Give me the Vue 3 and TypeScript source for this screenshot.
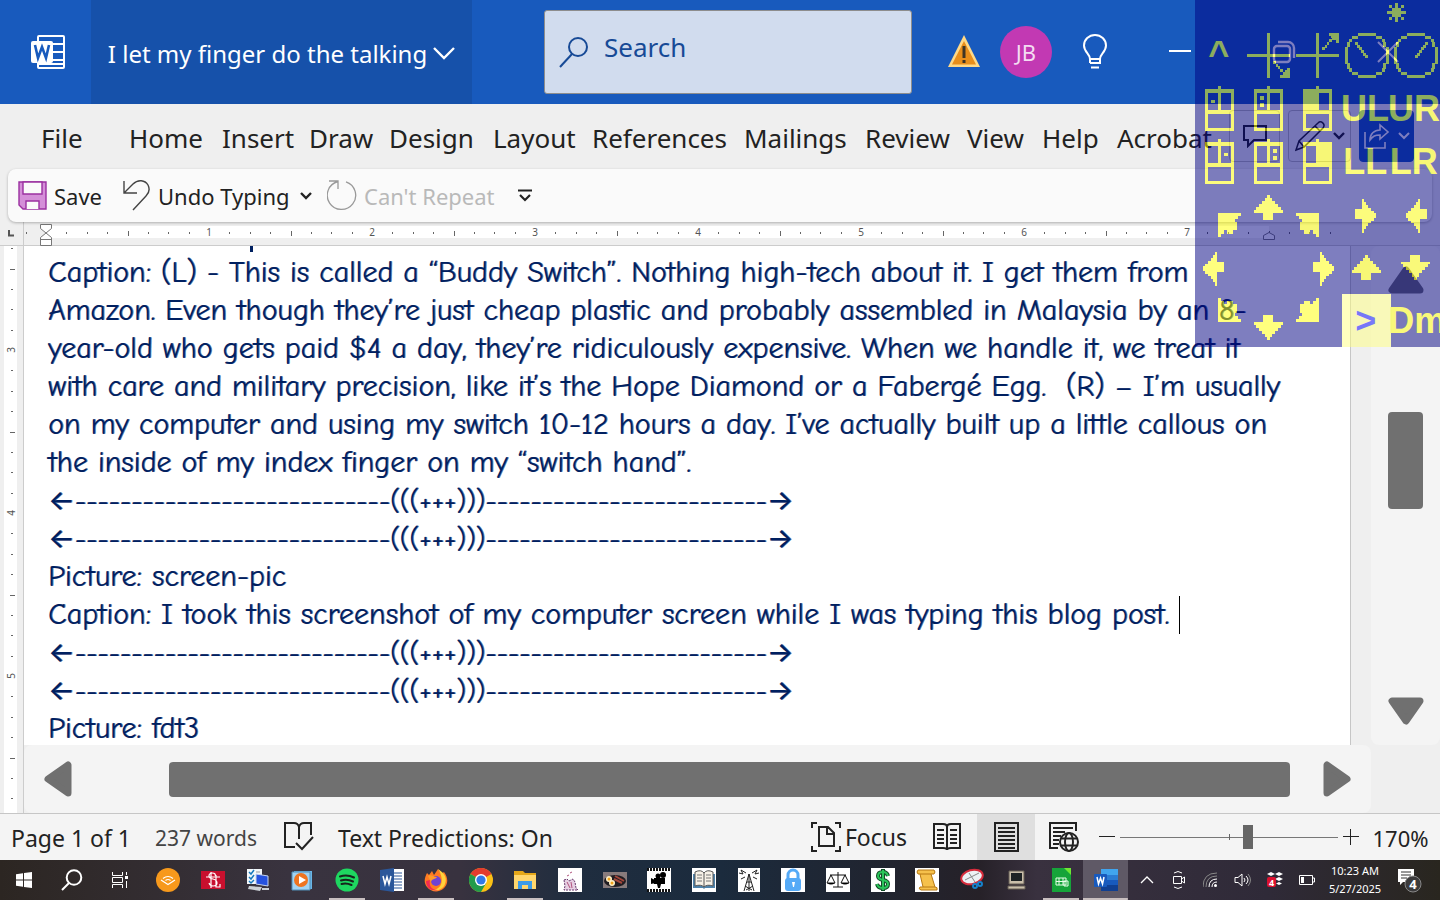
<script setup lang="ts">
import { ref } from 'vue'

interface Tab { name: string; width: number }
interface Line { text: string; caret?: boolean; rule?: boolean }
interface App { id: string; label: string; running?: boolean; active?: boolean }

const tabs: Tab[] = [
  { name: 'File', width: 88 },
  { name: 'Home', width: 93 },
  { name: 'Insert', width: 87 },
  { name: 'Draw', width: 80 },
  { name: 'Design', width: 104 },
  { name: 'Layout', width: 99 },
  { name: 'References', width: 152 },
  { name: 'Mailings', width: 121 },
  { name: 'Review', width: 102 },
  { name: 'View', width: 75 },
  { name: 'Help', width: 75 },
  { name: 'Acrobat', width: 100 },
]

const divider = '←' + '-'.repeat(28) + '(((+++)))' + '-'.repeat(25) + '→'

const lines: Line[] = [
  { text: 'Caption: (L) - This is called a “Buddy Switch”. Nothing high-tech about it. I get them from' },
  { text: 'Amazon. Even though they’re just cheap plastic and probably assembled in Malaysia by an 8-' },
  { text: 'year-old who gets paid $4 a day, they’re ridiculously expensive. When we handle it, we treat it' },
  { text: 'with care and military precision, like it’s the Hope Diamond or a Fabergé Egg.  (R) – I’m usually' },
  { text: 'on my computer and using my switch 10-12 hours a day. I’ve actually built up a little callous on' },
  { text: 'the inside of my index finger on my “switch hand”.' },
  { text: divider, rule: true },
  { text: divider, rule: true },
  { text: 'Picture: screen-pic' },
  { text: 'Caption: I took this screenshot of my computer screen while I was typing this blog post. ', caret: true },
  { text: divider, rule: true },
  { text: divider, rule: true },
  { text: 'Picture: fdt3' },
]

// Ruler marks: eighths of an inch, 163px to the inch
const INCH = 163
function marks(origin: number, from: number, to: number) {
  const out: { pos: number; kind: string; n: number }[] = []
  for (let i = -8; i < 80; i++) {
    const pos = Math.round(origin + (i * INCH) / 8)
    if (i === 0 || pos < from || pos > to) continue
    const kind = i % 8 === 0 ? 'num' : i % 4 === 0 ? 'half' : 'dot'
    out.push({ pos, kind, n: i / 8 })
  }
  return out
}
const hMarks = marks(46, 25, 1330)
const vMarks = marks(-385, 0, 568)

const zoom = ref(59)

const apps: App[] = [
  { id: 'audible', label: 'Audible' },
  { id: 'cards', label: 'Cardinals' },
  { id: 'remote', label: 'Control panel' },
  { id: 'media', label: 'Media player' },
  { id: 'spotify', label: 'Spotify', running: true },
  { id: 'word13', label: 'Word document' },
  { id: 'firefox', label: 'Firefox', running: true },
  { id: 'chrome', label: 'Chrome' },
  { id: 'files', label: 'File Explorer', running: true },
  { id: 'pot', label: 'Kettle' },
  { id: 'pan', label: 'Breakfast' },
  { id: 'film', label: 'Movies' },
  { id: 'book', label: 'Books' },
  { id: 'tower', label: 'Radio' },
  { id: 'lock', label: 'Passwords' },
  { id: 'scales', label: 'Legal' },
  { id: 'dollar', label: 'Money' },
  { id: 'scroll', label: 'Scroll' },
  { id: 'snip', label: 'Snipping Tool' },
  { id: 'pc', label: 'Computer' },
  { id: 'calc', label: 'LibreOffice Calc', running: true },
  { id: 'word', label: 'Word', running: true, active: true },
]

const dialQuarter = [
  [0, -67, 27, 9], [27, -58, 18, 9], [45, -49, 9, 10], [50, -40, 9, 16], [57, -25, 9, 25],
]
const quadrants = ['scale(1 1)', 'scale(-1 1)', 'scale(1 -1)', 'scale(-1 -1)']
const dials = [529, 676]
const panes = [0, 147, 294]
const diagonal = [0, 1, 2, 3, 4, 5]
</script>

<template>
  <div class="screen">
    <header class="titlebar">
      <div class="logo">
        <svg width="34" height="34" viewBox="0 0 34 34" fill="none" stroke="#fff" stroke-width="2">
          <rect x="7" y="1" width="26" height="32" rx="1" />
          <path d="M21 9h12M21 17h12M21 25h12M8 29h25" />
          <rect x="0" y="6" width="22" height="22" rx="2" fill="#fff" stroke="none" />
          <path d="M4 10l3 13 4-11 4 11 3-13" stroke="#185abd" stroke-width="2.600" />
        </svg>
      </div>
      <button class="doc-name">
        <span>I let my finger do the talking</span>
        <svg width="22" height="14" viewBox="0 0 22 14" fill="none" stroke="#fff" stroke-width="2.400"><path d="M1 2l10 10L21 2" /></svg>
      </button>
      <label class="search">
        <svg width="30" height="32" viewBox="0 0 30 32" fill="none" stroke="#174a96" stroke-width="2"><circle cx="19" cy="11" r="9" /><path d="M13 18L1 31" /></svg>
        <input type="text" placeholder="Search" aria-label="Search" />
      </label>
      <div class="account">
        <button class="icon-btn" aria-label="Warning">
          <svg width="32" height="34" viewBox="0 0 32 34"><path d="M16 0L32 32H0z" fill="#ffd987" /><path d="M16 6L28 29.500H4z" fill="#e88e1b" /><path d="M14.500 11h3v12h-3zM14.500 25h3v3h-3z" fill="#3e3425" /></svg>
        </button>
        <button class="avatar">JB</button>
        <button class="icon-btn" aria-label="Tips">
          <svg width="26" height="36" viewBox="0 0 26 36" fill="none" stroke="#fff" stroke-width="2"><path d="M8 25c0-5-6-7-6-13.500a11 10.500 0 0 1 22 0c0 6.500-6 8.500-6 13.500zM8 29h10v-4M8 25v4M9 33.500h8" /></svg>
        </button>
      </div>
      <div class="window-buttons">
        <button aria-label="Minimize"><svg width="22" height="22" viewBox="0 0 22 22"><path d="M0 10h22" stroke="#fff" stroke-width="2" /></svg></button>
        <button aria-label="Restore"><svg width="24" height="24" viewBox="0 0 24 24" fill="none" stroke="#fff" stroke-width="2.400"><rect x="2" y="6" width="16" height="16" rx="3" /><path d="M6 2h10a6 6 0 0 1 6 6v10" /></svg></button>
        <button aria-label="Close"><svg width="22" height="22" viewBox="0 0 22 22"><path d="M1 1l20 20M21 1L1 21" stroke="#fff" stroke-width="2" /></svg></button>
      </div>
    </header>

    <nav class="ribbon">
      <button v-for="t in tabs" :key="t.name" class="tab" :style="{ width: t.width + 'px' }">{{ t.name }}</button>
      <div class="ribbon-actions">
        <button class="act comment" aria-label="Comments">
          <svg width="26" height="24" viewBox="0 0 26 24" fill="none" stroke="#222" stroke-width="2"><path d="M2 2h22v14H12l-6 6v-6H2z" /></svg>
        </button>
        <button class="act edit" aria-label="Editing">
          <svg width="30" height="32" viewBox="0 0 30 32" fill="none" stroke="#222" stroke-width="1.500"><path d="M1 30l3-9L23 3c3-3 8 1 5 5L9 27zM4 21l5 6M20 6l5 5" /></svg>
          <svg width="12" height="8" viewBox="0 0 12 8" fill="none" stroke="#222" stroke-width="2.400"><path d="M1 1l5 5 5-5" /></svg>
        </button>
        <button class="act share" aria-label="Share">
          <svg width="26" height="26" viewBox="0 0 26 26" fill="none" stroke="#fff" stroke-width="1.600"><path d="M1 9v16h20v-6M6 17c0-6 4-10 10-10V2l8 7-8 7v-4c-5 0-7 1-10 5z" /></svg>
          <svg width="12" height="8" viewBox="0 0 12 8" fill="none" stroke="#fff" stroke-width="2"><path d="M1 1l5 5 5-5" /></svg>
        </button>
      </div>
    </nav>

    <div class="quick">
      <button class="q save">
        <svg width="29" height="29" viewBox="0 0 29 29" fill="#d48fd8" stroke="#9b30a0" stroke-width="1.400"><path d="M1 1h27v27H5l-4-4z" /><path d="M5 1h19v12H5zM8 28v-8h13v8" fill="#fafafa" /></svg>
        <span>Save</span>
      </button>
      <button class="q undo">
        <svg width="28" height="31" viewBox="0 0 28 31" fill="none" stroke="#444" stroke-width="1.400"><path d="M1 1v12h13M1 13L10 4c5-5 12-4 15 1 2 4 1 8-2 11L10 30" /></svg>
        <span>Undo Typing</span>
      </button>
      <button class="q more" aria-label="Undo list"><svg width="12" height="8" viewBox="0 0 12 8" fill="none" stroke="#222" stroke-width="2.400"><path d="M1 1l5 5 5-5" /></svg></button>
      <button class="q redo" disabled>
        <svg width="30" height="31" viewBox="0 0 30 31" fill="none" stroke="#999" stroke-width="1.300"><path d="M2 1h9v8M11 1.500A14.200 14.200 0 1 0 19 1.800" /></svg>
        <span>Can't Repeat</span>
      </button>
      <button class="q custom" aria-label="Customize toolbar"><svg width="16" height="14" viewBox="0 0 16 14" fill="none" stroke="#222" stroke-width="2.200"><path d="M1 1.500h14M3 6l5 5 5-5" /></svg></button>
    </div>

    <div class="hruler">
      <svg width="100%" height="24">
        <rect x="46" y="4" width="1223" height="12" fill="#fff" />
        <path d="M9 8v5.500h5" fill="none" stroke="#555" stroke-width="2" />
        <path d="M23.500 0v24" stroke="#ccc" />
        <template v-for="m in hMarks" :key="m.pos">
          <text v-if="m.kind === 'num'" :x="m.pos" y="14" text-anchor="middle" class="rnum">{{ m.n }}</text>
          <rect v-else :x="m.pos" :y="m.kind === 'half' ? 9 : 10" width="1" :height="m.kind === 'half' ? 5 : 2" fill="#666" />
        </template>
        <g fill="#fff" stroke="#777"><path d="M40.500 2.500h11v4l-5.500 4.500-5.500-4.500zM40.500 23.500v-8L46 11l5.500 4.500v8zM40.500 17.500h11" /><path d="M1263.500 17.500v-4l5.500-3 5.500 3v4z" /></g>
      </svg>
    </div>

    <main class="work">
      <div class="vruler">
        <svg width="24" height="100%">
          <rect x="4" y="0" width="13" height="100%" fill="#fff" />
          <template v-for="m in vMarks" :key="m.pos">
            <text v-if="m.kind === 'num'" :transform="`translate(15 ${m.pos}) rotate(-90)`" text-anchor="middle" class="rnum">{{ m.n }}</text>
            <rect v-else :x="m.kind === 'half' ? 10 : 11" :y="m.pos" :width="m.kind === 'half' ? 5 : 2" height="1" fill="#666" />
          </template>
        </svg>
      </div>
      <div class="center">
        <div class="page-row">
          <article class="page">
            <i class="descender"></i>
            <p v-for="(l, i) in lines" :key="i" :class="{ rule: l.rule }">{{ l.text }}<span v-if="l.caret" class="caret"></span></p>
          </article>
        </div>
        <div class="hscroll">
          <button aria-label="Scroll left"><svg width="28" height="36" viewBox="0 0 28 36"><path d="M24 4v28L4 18z" class="tri" /></svg></button>
          <div class="htrack"><div class="hthumb"></div></div>
          <button aria-label="Scroll right"><svg width="28" height="36" viewBox="0 0 28 36"><path d="M4 4v28l20-14z" class="tri" /></svg></button>
        </div>
      </div>
      <div class="side">
        <div class="vscroll">
          <button aria-label="Scroll up"><svg width="36" height="28" viewBox="0 0 36 28"><path d="M4 24h28L18 4z" class="tri" /></svg></button>
          <div class="vtrack"><div class="vthumb"></div></div>
          <button aria-label="Scroll down"><svg width="36" height="28" viewBox="0 0 36 28"><path d="M4 4h28L18 24z" class="tri" /></svg></button>
        </div>
      </div>
    </main>

    <footer class="status">
      <button class="s-page">Page 1 of 1</button>
      <button class="s-words">237 words</button>
      <button class="s-proof" aria-label="Proofing">
        <svg width="30" height="30" viewBox="0 0 30 30" fill="none" stroke="#222" stroke-width="2"><path d="M11 25H1V1h9q4 0 5 4v12M15 5q1-4 5-4h7v12M12 21l6 6L29 15" /></svg>
      </button>
      <button class="s-pred">Text Predictions: On</button>
      <span class="spring"></span>
      <button class="s-focus">
        <svg width="30" height="30" viewBox="0 0 30 30" fill="none" stroke="#222" stroke-width="2"><path d="M1 6V1h5M24 1h5v5M29 24v5h-5M6 29H1v-5M8 5h9l6 6v13H8zM16 5v7h7" /></svg>
        <span>Focus</span>
      </button>
      <button class="s-read" aria-label="Read mode">
        <svg width="28" height="28" viewBox="0 0 28 28" fill="none" stroke="#222" stroke-width="2"><path d="M1 1h9q4 0 4 3 0-3 4-3h9v24h-9q-4 0-4 2 0-2-4-2H1zM14 4v22" /><path d="M4 7h7M4 12h7M4 16h7M4 20h7M17 7h7M17 12h7M17 16h7M17 20h7" /></svg>
      </button>
      <button class="s-print" aria-label="Print layout">
        <svg width="25" height="30" viewBox="0 0 25 30" fill="none" stroke="#222" stroke-width="2"><path d="M1 1h23v28H1zM4 6h17M4 10h17M4 14h17M4 18h17M4 22h17M4 26h17" /></svg>
      </button>
      <button class="s-web" aria-label="Web layout">
        <svg width="30" height="30" viewBox="0 0 30 30" fill="none" stroke="#222" stroke-width="2"><path d="M9 26H1V1h26v8M4 6h20M4 10h12M4 14h8M4 18h6M4 22h6" /><circle cx="20" cy="20" r="9" /><ellipse cx="20" cy="20" rx="4" ry="9" /><path d="M12 16.500h16M12 23.500h16" /></svg>
      </button>
      <button class="s-step" aria-label="Zoom out"><svg width="16" height="16" viewBox="0 0 16 16"><path d="M0 7.500h16" stroke="#222" /></svg></button>
      <input v-model="zoom" class="slider" type="range" min="0" max="100" aria-label="Zoom" />
      <button class="s-step" aria-label="Zoom in"><svg width="16" height="16" viewBox="0 0 16 16"><path d="M0 7.500h16M7.500 0v16" stroke="#222" /></svg></button>
      <button class="s-pct">170%</button>
    </footer>

    <div class="taskbar">
      <div class="start">
        <button aria-label="Start"><svg width="16" height="16" viewBox="0 0 16 16" fill="#fff"><path d="M0 2.200L7 1.200v6.300H0zM8 1l8-1v7.500H8zM0 8.500h7v6.300l-7-1zM8 8.500h8V16l-8-1z" /></svg></button>
        <button aria-label="Search"><svg width="22" height="22" viewBox="0 0 22 22" fill="none" stroke="#fff" stroke-width="2"><circle cx="13" cy="8.500" r="7.300" /><path d="M8 14l-7 7" /></svg></button>
        <button aria-label="Task view"><svg width="16" height="16" viewBox="0 0 16 16" fill="none" stroke="#fff"><path d="M.500 0v3.500h10V0M.500 5.500h10v5H.500zM.500 16v-3.500h10V16M14.500 0v3M14.500 9v7" /><path d="M13 4h3v3h-3z" fill="#fff" stroke="none" /></svg></button>
      </div>
      <div class="apps">
        <button v-for="a in apps" :key="a.id" :aria-label="a.label" :class="{ running: a.running, active: a.active }">
          <svg width="24" height="24" viewBox="0 0 24 24">
            <template v-if="a.id === 'audible'"><circle cx="12" cy="12" r="12" fill="#f7991c" /><path d="M5 12l7 4.500 7-4.500M7 10.500q5-4 10 0M9.500 12.500q2.500-2 5 0" fill="none" stroke="#fff" stroke-width="1.200" /></template>
            <template v-else-if="a.id === 'cards'"><path d="M0 3h24v18H0z" fill="#c8102e" /><path d="M14.500 8q0-3-3-3-3.500 0-3.500 3 0 2 4 3t4 4q0 3-4 3-3 0-4-3M10 4v16M15 7v12h4v-3M5 9h14" fill="none" stroke="#fff" stroke-width="1.200" /></template>
            <template v-else-if="a.id === 'remote'"><path d="M1 1h15v15H1z" fill="#f3f7fa" /><path d="M3 4l2 2 3-4M3 9l2 2 3-4M3 13l2 2 3-3" stroke="#1779bd" fill="none" stroke-width="1.500" /><path d="M10 4h4M10 8h3" stroke="#999" /><path d="M10 6l12 2v10l-12-2z" fill="#2652df" stroke="#c7d5ee" /><path d="M3 18l13 1-2 4-12-2zM16 20h7v2h-7z" fill="#ccd1d6" /></template>
            <template v-else-if="a.id === 'media'"><path d="M4 3h18v18H4z" fill="#6ab5e6" /><path d="M2 4h18v18H2z" fill="#a1d3f3" stroke="#518fb8" /><circle cx="11" cy="12" r="7" fill="#ee7420" /><path d="M9 8l7 4-7 4z" fill="#fff" /></template>
            <template v-else-if="a.id === 'spotify'"><circle cx="12" cy="12" r="11.500" fill="#1ed760" /><path d="M5 8.500q7-2.500 14 1M6 12.500q6-2 12 1M6.500 16q5-1.500 10 1" fill="none" stroke="#17251c" stroke-width="2" stroke-linecap="round" /></template>
            <template v-else-if="a.id === 'word13'"><path d="M12 1h12v22H12z" fill="#fff" /><path d="M14 5h8M14 8h8M14 11h8M14 14h8M14 17h8M14 20h8" stroke="#2b579a" /><path d="M0 2l14-2v24L0 22z" fill="#2b579a" /><path d="M3 8l2 8 2-7 2 7 2-8" fill="none" stroke="#fff" stroke-width="1.500" /></template>
            <template v-else-if="a.id === 'firefox'"><path d="M3 5l2 2 3-4 2 4 4-6 3 5 3-2c5 7 4 13-1 17s-12 3-16-2-2-10 0-14z" fill="#ff7a22" /><path d="M14 1c8 5 9 10 7 15-1 4-7 8-13 6 8 0 14-8 6-21z" fill="#ffd23b" /><path d="M2 13c0 7 6 11 12 9-8 0-9-6-8-10z" fill="#f32b52" /><circle cx="12" cy="13" r="5" fill="#7043d4" /><path d="M4 8c3-2 5 1 9 1-2 3-5 1-6 5z" fill="#ff9c28" /></template>
            <template v-else-if="a.id === 'chrome'"><circle cx="12" cy="12" r="12" fill="#fbc116" /><path d="M12 12L1.600 6A12 12 0 0 1 22.400 6z" fill="#e33b2e" /><path d="M12 12L1.600 6A12 12 0 0 0 12 24l5.200-9z" fill="#229b4b" /><circle cx="12" cy="12" r="6" fill="#fff" /><circle cx="12" cy="12" r="4.600" fill="#3079e8" /></template>
            <template v-else-if="a.id === 'files'"><path d="M1 3h9l2 2h11v5H1z" fill="#e5a719" /><path d="M1 7h22v14H1z" fill="#ffd66d" /><path d="M5 13h14v8h-4v-4H9v4H5z" fill="#3c9be8" /></template>
            <template v-else-if="a.id === 'pot'"><path d="M0 0h24v24H0z" fill="#fff" /><path d="M6 12l3-1 2 2 4-2 2 3 1 6 2 2H6l1-4z" fill="#e6cfe3" stroke="#66376c" stroke-dasharray="2 1" /><path d="M9 8l2-1M12 5l2-1M9 14l3 6M13 14l1 6" stroke="#b0527c" /></template>
            <template v-else-if="a.id === 'pan'"><path d="M0 4h24v16H0z" fill="#887b7c" /><ellipse cx="12" cy="13" rx="11" ry="6" fill="#211d22" /><path d="M12 8l9 5M11 11l8 4" stroke="#a4473b" stroke-width="2" /><circle cx="6" cy="11" r="3" fill="#fff1ca" /><circle cx="9" cy="15" r="3" fill="#fff1ca" /><circle cx="6" cy="11" r="1.500" fill="#f0a31c" /><circle cx="9" cy="15" r="1.500" fill="#f0a31c" /></template>
            <template v-else-if="a.id === 'film'"><path d="M0 0h24v24H0z" fill="#fff" /><path d="M0 1.500h24M0 22.500h24" stroke="#111" stroke-width="3" stroke-dasharray="2 1" /><circle cx="11" cy="8" r="2.500" /><circle cx="16" cy="7" r="3" /><path d="M7 10h11v6h-4l-1 4h-2l-1-4H7zM4 10l4 2v3l-4 1z" /></template>
            <template v-else-if="a.id === 'book'"><path d="M0 0h24v24H0z" fill="#fff" /><path d="M1 6h22v14H13l-1 1-1-1H1z" fill="#4f83ab" /><path d="M3 4q6-3 9 1 3-4 9-1v14q-6-2-9 1-3-3-9-1zM12 5v14" fill="#f8f2e7" stroke="#555" /><path d="M5 7h5M5 10h5M5 13h5M14 7h5M14 10h5M14 13h5" stroke="#777" /></template>
            <template v-else-if="a.id === 'tower'"><path d="M1 0h22v24H1z" fill="#fff" /><path d="M7 23l5-17 5 17M12 6v17M10 14h4M8 18l7 4M16 18l-7 4M9 5L4 2l2 4-4-1M15 5l5-3-2 4 4-1M4 11l4-2M20 11l-4-2" fill="none" stroke="#222" /></template>
            <template v-else-if="a.id === 'lock'"><path d="M0 0h24v24H0z" fill="#fff" /><path d="M7 11V7a5 5 0 0 1 10 0v4" fill="none" stroke="#55aaf7" stroke-width="3" /><rect x="4" y="10" width="16" height="13" rx="3" fill="#55aaf7" /><path d="M11 14h3l-1 5h-1z" fill="#fff" /></template>
            <template v-else-if="a.id === 'scales'"><path d="M0 0h24v24H0z" fill="#fff" /><path d="M12 4v15M7 19h10M4 7h16M5 7l-4 8h8zM19 7l-4 8h8z" fill="none" stroke="#111" /><path d="M1 15h8q-4 3-8 0M15 15h8q-4 3-8 0" /></template>
            <template v-else-if="a.id === 'dollar'"><path d="M0 0h24v24H0z" fill="#fff" /><path d="M17 8q-1-4-5-4-5 0-5 4 0 3 5 4t5 4q0 4-5 4-5 0-6-4M12 1v22" fill="none" stroke="#124d27" stroke-width="4" /><path d="M17 8q-1-4-5-4-5 0-5 4 0 3 5 4t5 4q0 4-5 4-5 0-6-4M12 2v20" fill="none" stroke="#2bc65b" stroke-width="2" /></template>
            <template v-else-if="a.id === 'scroll'"><path d="M0 0h24v24H0z" fill="#fff" /><path d="M3 2h16q2 2 0 4h-3l4 13q3 0 2 3H6q-3-1-1-3h3L5 6H3q-2-2 0-4z" fill="#f6c14b" stroke="#b87912" /><path d="M5 6h11M8 19h12" stroke="#b87912" /></template>
            <template v-else-if="a.id === 'snip'"><ellipse cx="12" cy="9" rx="11" ry="7" transform="rotate(-15 12 9)" fill="#edf1f4" stroke="#d72c3c" stroke-width="2" /><path d="M5 12l14-7M9 5l6 9" stroke="#888" /><circle cx="15" cy="18" r="2" fill="none" stroke="#1681cb" stroke-width="2" /><circle cx="20" cy="16" r="2" fill="none" stroke="#1681cb" stroke-width="2" /></template>
            <template v-else-if="a.id === 'pc'"><path d="M5 3h15v13H5zM4 18h17v3H4z" fill="#c9beaa" stroke="#665f54" /><path d="M7 5h11v8H7z" fill="#1e2325" /></template>
            <template v-else-if="a.id === 'calc'"><path d="M3 0h13l6 6v18H3z" fill="#16a43a" /><path d="M15 0h7v7z" fill="#6ee735" /><path d="M7 10h10v7H7zM7 13.500h10M10 10v7M14 10v7M15 13h4v5h-4z" fill="none" stroke="#e7ffe8" /></template>
            <template v-else><path d="M7 1h17v6H7z" fill="#41a5ee" /><path d="M7 7h17v5H7z" fill="#2b7cd3" /><path d="M7 12h17v5H7z" fill="#185abd" /><path d="M7 17h17v6H7z" fill="#103f91" /><rect x="0" y="6" width="13" height="13" rx="1" fill="#185abd" /><path d="M3 9l1.500 7 2-6 2 6L10 9" fill="none" stroke="#fff" stroke-width="1.500" /></template>
          </svg>
        </button>
      </div>
      <div class="tray">
        <button aria-label="Hidden icons"><svg width="14" height="8" viewBox="0 0 14 8" fill="none" stroke="#fff" stroke-width="1.300"><path d="M1 7l6-6 6 6" /></svg></button>
        <button aria-label="Meet now"><svg width="14" height="18" viewBox="0 0 14 18" fill="none" stroke="#fff"><path d="M2 2q4-3 8 0M2 16q4 3 8 0M1.500 5.500h8v7h-8zM9.500 8l3-2v6l-3-2" /></svg></button>
        <button aria-label="Network"><svg width="16" height="16" viewBox="0 0 16 16" fill="none" stroke="#fff"><path d="M9 15q0-5 5-5M6 15q0-8 8-8" /><path d="M3 15Q3 4 14 4M0 15Q0 1 14 1" stroke="#888" /><circle cx="12.500" cy="13.500" r="1.500" fill="#fff" stroke="none" /></svg></button>
        <button aria-label="Volume"><svg width="18" height="14" viewBox="0 0 18 14" fill="none" stroke="#fff"><path d="M1 4.500h3l4-3.500v12L4 9.500H1zM10 5q2 2 0 4M12 3q4 4 0 8" /><path d="M14 1q5 6 0 12" stroke="#888" /></svg></button>
        <button aria-label="Dropbox"><svg width="18" height="18" viewBox="0 0 18 18"><path d="M5 1l4 2-4 2-4-2zM13 1l4 2-4 2-4-2zM13 6l4 2-4 2-4-2zM13 11l3 1.500-3 1.500-3-1.500z" fill="#fff" /><rect x="1" y="6" width="9" height="10" rx="2" fill="#dc1030" /><text x="5.500" y="14.500" text-anchor="middle" class="badge-num">4</text></svg></button>
        <button aria-label="Battery"><svg width="16" height="10" viewBox="0 0 16 10"><path d="M.500.500h13v9H.500zM14 3h1.500v4H14" fill="none" stroke="#fff" /><path d="M2 2h3v6H2z" fill="#fff" /></svg></button>
        <button class="clock"><span>10:23 AM</span><span>5/27/2025</span></button>
        <button class="notes" aria-label="Notifications"><svg width="26" height="26" viewBox="0 0 26 26"><path d="M1 2h16v13H6l-3 3v-3H1z" fill="#fff" /><path d="M4 5h10M4 8h10M4 11h6" stroke="#333" /><circle cx="16" cy="17" r="8" fill="#3b3a3b" stroke="#888" /><text x="16" y="22" text-anchor="middle" class="note-num">4</text></svg></button>
      </div>
    </div>

    <aside class="scan-panel">
      <svg width="245" height="347" viewBox="15 0 735 1041" fill="#ff0">
        <defs>
          <path id="up" d="M-4 0h8v9h6v10h9v9h9v9h9v9h7v7H15v22h-30V53h-29v-7h7v-9h9v-9h9v-9h9V9h6z" />
          <path id="right" d="M0 31h21V0h6v9h6v9h7v9h8v9h8v6h7v9h6v0h-6v6h-7v8h-8v8h-8v9h-7v9h-6v10h-6V61H0z" />
          <path id="nw" d="M0 0h69v9h-8v9H50v9h7v25H46v10H28V52h-9v10H9v9H0z" />
        </defs>
        <g shape-rendering="crispEdges">
          <path d="M591 33h57v9h-57zM615 9h9v57h-9zM606 24h27v27h-27zM597 15h9v9h-9zM633 15h9v9h-9zM597 51h9v9h-9zM633 51h9v9h-9z" />
          <path d="M231 99h9v135h-9zM171 162h129v9H171zM378 99h9v135h-9zM318 162h129v9H318z" />
          <path d="M300 204v30h-29v-9h7v-7h7v-7h7v-7z" /><path d="M447 129h-8v-9h-8v-7h-7v-5h-7v-9h30z" />
          <g v-for="i in diagonal" :key="i"><rect :x="250 + i * 7" :y="183 + i * 8" width="7" height="9" /><rect :x="397 + i * 7" :y="142 - i * 8" width="7" height="9" /></g>
          <g v-for="(c, k) in dials" :key="c" :transform="`translate(${c + 1} 166)`">
            <g v-for="q in quadrants" :key="q" :transform="q"><rect v-for="(r, j) in dialQuarter" :key="j" :x="r[0]" :y="r[1]" :width="r[2]" :height="r[3]" /></g>
            <rect v-for="i in diagonal" :key="i" :x="k ? 28 - i * 6 : -35 + i * 6" :y="-40 + i * 8" width="8" height="9" />
          </g>
          <g v-for="(dx, k) in panes" :key="dx" :transform="`translate(${dx} 0)`">
            <path v-for="dy in [0, 159]" :key="dy" :transform="`translate(0 ${dy})`" fill-rule="evenodd" d="M45 267h39v-9h9v9h39v126H45zM54 279v51h30v-51zM93 279v51h30v-51zM54 342v42h69v-42z" />
            <path v-if="k === 0" d="M63 300h12v9H63zM102 459h12v9h-12z" />
            <path v-if="k === 1" d="M63 288h12v12H63zM63 309h12v12H63zM102 447h12v12h-12zM102 468h12v12h-12z" />
            <path v-if="k === 2" d="M45 267h45v64H45zM86 426h45v64H86z" />
          </g>
          <use href="#up" x="235" y="585" /><use href="#up" x="529" y="765" />
          <use href="#up" transform="translate(235 1020) scale(1 -1)" /><use href="#up" transform="translate(676 839) scale(1 -1)" />
          <use href="#right" x="495" y="597" /><use href="#right" x="369" y="756" />
          <use href="#right" transform="translate(711 597) scale(-1 1)" /><use href="#right" transform="translate(102 756) scale(-1 1)" />
          <use href="#nw" x="84" y="639" /><use href="#nw" transform="translate(387 639) scale(-1 1)" />
          <use href="#nw" transform="translate(84 965) scale(1 -1)" /><use href="#nw" transform="translate(387 965) scale(-1 -1)" />
        </g>
        <rect x="456" y="882" width="147" height="159" fill="#ffff80" />
        <g class="pad-text">
          <text x="55" y="199">^</text>
          <text x="453" y="362">UL</text><text x="594" y="362">UR</text>
          <text x="460" y="521">LL</text><text x="599" y="521">LR</text>
          <text x="595" y="998">Dm</text>
          <text x="496" y="998" fill="#00f">&gt;</text>
        </g>
      </svg>
    </aside>
  </div>
</template>

<style>
html, body { margin: 0; background: #efefef; }
</style>

<style scoped>
* { box-sizing: border-box; }
.screen { position: relative; display: flex; flex-direction: column; min-height: 100vh; overflow: hidden; background: #efefef; color: #222; font-family: "Segoe UI", "Noto Sans", "Open Sans", sans-serif; }
button { display: flex; align-items: center; justify-content: center; padding: 0; border: 0; background: none; color: inherit; font: inherit; white-space: nowrap; }
svg { display: block; flex: none; }

.titlebar { display: flex; height: 104px; background: #185abd; color: #fff; }
.logo { display: flex; align-items: center; justify-content: center; width: 91px; padding-left: 4px; }
.doc-name { width: 381px; gap: 6px; padding-top: 2px; background: #1651aa; font-size: 24px; }
.search { display: flex; align-items: center; flex: 1; min-width: 200px; margin: 10px 36px 10px 72px; padding: 0 14px; gap: 15px; background: #d1dcee; border: 1px solid #8d8d8d; border-radius: 3px; }
.search input { flex: 1; min-width: 0; height: 48px; padding: 0 0 10px; border: 0; outline: 0; background: none; font: 26px "Segoe UI", "Noto Sans", sans-serif; color: #174a96; }
.search input::placeholder { color: #174a96; opacity: 1; }
.account { display: flex; align-items: center; gap: 20px; width: 180px; }
.icon-btn:last-child { margin-left: 10px; }
.avatar { width: 52px; height: 52px; border-radius: 50%; background: #c239b3; color: #f3dcf1; font-size: 22px; }
.window-buttons { display: flex; }
.window-buttons button { width: 104px; }

.ribbon { display: flex; height: 64px; padding-left: 41px; align-items: center; font-size: 26px; }
.tab { flex: none; justify-content: flex-start; height: 52px; padding-top: 4px; }
.ribbon-actions { display: flex; gap: 8px; margin-left: 12px; }
.act { height: 52px; border: 1px solid #b8b8b8; border-radius: 4px; }
.comment { width: 51px; }
.edit { width: 63px; gap: 8px; }
.share { width: 55px; gap: 8px; background: #185abd; border-color: #185abd; }

.quick { display: flex; height: 53px; margin: 1px 8px 0; padding-left: 10px; background: #fafafa; border-radius: 8px; box-shadow: 0 1px 3px #0004; font-size: 22px; position: relative; z-index: 1; }
.q { gap: 7px; justify-content: flex-start; }
.save { width: 105px; }
.undo { width: 177px; }
.more { width: 27px; }
.redo { width: 190px; color: #b9b9b9; }

.hruler { height: 24px; border-bottom: 1px solid #ccc; }
.rnum { font: 10px "Noto Sans", sans-serif; fill: #555; }

.work { display: flex; flex: 1; min-height: 567px; }
.vruler { width: 24px; border-right: 1px solid #ccc; position: relative; overflow: hidden; }
.vruler svg { position: absolute; inset: 0; }
.center { display: flex; flex-direction: column; flex: 1; min-width: 0; }
.page-row { flex: 1; padding-right: 20px; overflow: hidden; }
.page { position: relative; height: 499px; padding: 8px 0 0 24px; border-right: 1px solid #c6c6c6; background: #fff; color: #002060; font: 500 30px "Comic Sans MS", "Comic Neue", Inter, "Noto Sans", sans-serif; text-shadow: 1px 0 #002060a0; overflow: hidden; }
.page p { margin: 0; height: 38px; line-height: 38px; white-space: pre; }
.page .rule { font-size: 28px; }
.descender { position: absolute; left: 226px; top: 0; width: 3px; height: 6px; background: #002060; }
.caret { display: inline-block; width: 1px; height: 38px; background: #000; vertical-align: top; }
.hscroll { display: flex; align-items: center; height: 68px; padding: 0 20px; background: #f4f4f4; border-radius: 8px; }
.htrack { flex: 1; padding: 0 33px 0 97px; }
.hthumb { height: 35px; border-radius: 4px; background: #707070; }
.tri { fill: #707070; stroke: #707070; stroke-width: 7; stroke-linejoin: round; }
.side { width: 69px; }
.vscroll { display: flex; flex-direction: column; align-items: center; height: 499px; padding: 20px 0; background: #f4f4f4; border-radius: 8px; }
.vtrack { flex: 1; padding-top: 118px; }
.vthumb { width: 35px; height: 97px; border-radius: 4px; background: #707070; }

.status { display: flex; align-items: stretch; height: 47px; padding: 0 12px 0 11px; background: #f4f4f4; border-top: 1px solid #c6c6c6; font-size: 23px; }
.status .s-words { margin: 0 3px 0 24px; color: #444; font-size: 21px; }
.s-proof { margin: 0 24px; }
.s-page, .s-words, .s-pred, .s-pct { padding-top: 2px; }
.spring { flex: 1; }
.s-focus { gap: 4px; }
.s-read { margin: 0 16px 0 26px; }
.s-print { width: 58px; background: #dfdfdf; }
.s-web { margin: 0 20px 0 14px; }
.slider { appearance: none; width: 218px; height: 24px; margin: 11px 5px; background: linear-gradient(#666, #666) 109px 50% / 1px 6px no-repeat, linear-gradient(#777, #777) 0 50% / 100% 1px no-repeat; }
.slider::-webkit-slider-thumb { appearance: none; width: 10px; height: 24px; background: #666; }
.s-pct { margin-left: 14px; width: 55px; font-size: 22px; }

.taskbar { display: flex; height: 40px; background: linear-gradient(90deg, #2c2622 0, #39333f 20%, #38323f 32%, #1f2d3f 40%, #1b2b3d 50%, #202531 60%, #262128 68%, #39313f 72%, #2f2a38 88%, #29261f 100%); color: #fff; }
.start { display: flex; }
.start button { width: 48px; }
.apps { display: flex; flex: 1; margin-left: 2px; }
.apps button { flex: 1; }
.apps .running { background: linear-gradient(#c8bfc0, #c8bfc0) center bottom / 36px 2px no-repeat; }
.apps .active { background: linear-gradient(#c8bfc0, #c8bfc0) center bottom / 100% 2px no-repeat #5f5966; }
.tray { display: flex; align-items: center; width: 312px; padding: 0 7px 0 3px; }
.tray button { width: 32px; height: 40px; }
.tray .clock { width: 64px; flex-direction: column; font-size: 11px; line-height: 18px; }
.tray .notes { flex: 1; }
.badge-num { font: bold 9px "Noto Sans", sans-serif; fill: #fff; }
.note-num { font: bold 13px "Noto Sans", sans-serif; fill: #fff; }

.scan-panel { position: absolute; top: 0; right: 0; z-index: 2; width: 245px; height: 347px; background: #000080; opacity: .5; overflow: hidden; pointer-events: none; }
.pad-text { font: bold 108px "Liberation Sans", Arial, sans-serif; }
</style>
